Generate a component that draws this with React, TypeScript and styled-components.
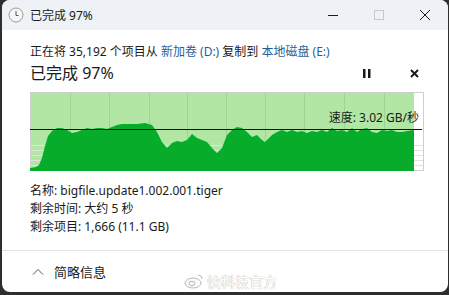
import * as React from 'react'
import styled, { createGlobalStyle } from 'styled-components'

const GlobalStyle = createGlobalStyle`
  html, body {
    margin: 0;
    padding: 0;
    background: #2e2e2e;
  }
  body {
    font-family: "Noto Sans", "Noto Sans CJK SC", sans-serif;
    color: #1a1a1a;
  }
`

const Page = styled.div`
  width: 449px;
  height: 295px;
  padding: 0 1px 3px 2px;
  box-sizing: border-box;
`

const Window = styled.div`
  height: 100%;
  background: #fff;
  border-radius: 8px;
  overflow: hidden;
  display: flex;
  flex-direction: column;
`

const TitleBar = styled.div`
  height: 30px;
  flex: none;
  background: #eef1f6;
  display: flex;
  align-items: center;
  padding-left: 6px;
`

const TitleText = styled.span`
  font-size: 12px;
  margin-left: 6px;
`

const TitleButtons = styled.div`
  margin-left: auto;
  display: flex;
  height: 100%;
`

const TitleButton = styled.div`
  width: 46px;
  height: 100%;
  display: flex;
  align-items: center;
  justify-content: center;
`

const Body = styled.div`
  padding: 13px 26px 0 28px;
  display: flex;
  flex-direction: column;
`

const Summary = styled.div`
  font-size: 12px;
  line-height: 18px;
  white-space: nowrap;
`

const Link = styled.span`
  color: #1f5f96;
`

const ProgressRow = styled.div`
  display: flex;
  align-items: center;
  height: 20px;
  margin-top: 2px;
`

const Percent = styled.span`
  font-size: 16px;
  line-height: 20px;
  white-space: nowrap;
  flex: none;
`

const IconButton = styled.div<{ $first?: boolean }>`
  margin-left: ${p => (p.$first ? 'auto' : '33px')};
  margin-right: ${p => (p.$first ? '0' : '1px')};
  width: 14px;
  height: 14px;
  display: flex;
  align-items: center;
  justify-content: center;
`

const ChartBox = styled.div`
  position: relative;
  margin-top: 9px;
  width: 394px;
  height: 79px;
`

const SpeedLabel = styled.span`
  position: absolute;
  right: 5px;
  top: 18px;
  font-size: 12px;
  line-height: 16px;
  color: #1a1a1a;
`

const Details = styled.div`
  margin-top: 11px;
  font-size: 12px;
  line-height: 18px;
`

const Separator = styled.div`
  height: 1px;
  background: #e3e3e3;
  margin-top: 14px;
`

const Footer = styled.div`
  flex: 1;
  display: flex;
  align-items: center;
  padding-left: 30px;
  font-size: 13px;
  position: relative;
`

const FooterLabel = styled.span`
  margin-left: 10px;
`

const Watermark = styled.span`
  position: absolute;
  left: 182px;
  top: 20px;
  font-size: 14px;
  color: #ffffff;
  text-shadow: 0 0 1px #b8b8b8, 0 0 1px #b8b8b8;
  display: flex;
  align-items: center;
  gap: 3px;
`

const points: [number, number][] = [
  [28, 168], [34, 167], [37, 165], [40, 158], [43, 146], [46, 136], [50, 131], [55, 128],
  [60, 128], [65, 130], [70, 133], [75, 132], [80, 130], [85, 128], [90, 129], [95, 128],
  [100, 128], [105, 129], [110, 127], [115, 125], [120, 124], [128, 124], [135, 124],
  [143, 123], [150, 125], [155, 132], [160, 142], [165, 148], [170, 143], [175, 141],
  [180, 142], [185, 140], [190, 134], [195, 138], [200, 140], [205, 142], [210, 148],
  [215, 153], [220, 148], [225, 135], [230, 130], [235, 127], [240, 128], [245, 132],
  [250, 137], [255, 135], [260, 140], [263, 142], [270, 135], [275, 132], [280, 130],
  [285, 132], [290, 130], [295, 132], [300, 131], [305, 133], [310, 131], [315, 132],
  [320, 130], [325, 132], [330, 128], [335, 131], [340, 130], [345, 132], [350, 128],
  [355, 132], [360, 129], [365, 128], [370, 132], [375, 133], [380, 130], [385, 131],
  [390, 130], [395, 132], [400, 132], [405, 131], [412, 130],
]

function SpeedChart() {
  const ox = 28
  const oy = 92
  const w = 394
  const h = 79
  const done = 384
  const area =
    `M0 ${h} ` +
    points.map(([x, y]) => `L${x - ox} ${y - oy}`).join(' ') +
    ` L${done} ${h} Z`
  const vlines = [40, 79, 119, 157, 196, 235, 274, 314, 354]
  const hlines = [53, 58, 63, 68, 73]
  return (
    <svg width={w} height={h} viewBox={`0 0 ${w} ${h}`}>
      <rect x="0.5" y="0.5" width={w - 1} height={h - 1} fill="#fff" stroke="#cfcfcf" />
      <rect x="1" y="1" width={done - 1} height={h - 2} fill="#b1e6a4" />
      {hlines.map(y => (
        <line key={y} x1="1" x2={w - 1} y1={y + 0.5} y2={y + 0.5} stroke="#e2e2e2" />
      ))}
      {vlines.map(x => (
        <line key={x} x1={x + 0.5} x2={x + 0.5} y1="1" y2={h - 1} stroke="#9fd392" />
      ))}
      <path d={area} fill="#07ad2a" />
      <line x1="0" x2={w - 2} y1="37.5" y2="37.5" stroke="#111" strokeWidth="1" />
    </svg>
  )
}

function ClockIcon() {
  return (
    <svg width="16" height="16" viewBox="0 0 16 16">
      <circle cx="8" cy="8" r="7" fill="#f7f7f7" stroke="#9a9a9a" />
      <path d="M8 4 V8.5 H10.5" stroke="#555" strokeWidth="1" fill="none" />
    </svg>
  )
}

export default function App() {
  return (
    <Page>
      <GlobalStyle />
      <Window>
        <TitleBar>
          <ClockIcon />
          <TitleText>已完成 97%</TitleText>
          <TitleButtons>
            <TitleButton>
              <svg width="10" height="10" viewBox="0 0 10 10">
                <line x1="0" x2="10" y1="5.5" y2="5.5" stroke="#1a1a1a" />
              </svg>
            </TitleButton>
            <TitleButton>
              <svg width="10" height="10" viewBox="0 0 10 10">
                <rect x="0.5" y="0.5" width="9" height="9" fill="none" stroke="#c8c8c8" />
              </svg>
            </TitleButton>
            <TitleButton>
              <svg width="10" height="10" viewBox="0 0 10 10">
                <path d="M0 0 L10 10 M10 0 L0 10" stroke="#1a1a1a" />
              </svg>
            </TitleButton>
          </TitleButtons>
        </TitleBar>
        <Body>
          <Summary>
            正在将 35,192 个项目从 <Link>新加卷 (D:)</Link> 复制到 <Link>本地磁盘 (E:)</Link>
          </Summary>
          <ProgressRow>
            <Percent>已完成 97%</Percent>
            <IconButton $first>
              <svg width="8" height="9" viewBox="0 0 8 9">
                <rect x="0" y="0" width="2.5" height="9" fill="#1a1a1a" />
                <rect x="5" y="0" width="2.5" height="9" fill="#1a1a1a" />
              </svg>
            </IconButton>
            <IconButton>
              <svg width="9" height="9" viewBox="0 0 9 9">
                <path d="M1 1 L8 8 M8 1 L1 8" stroke="#1a1a1a" strokeWidth="2" />
              </svg>
            </IconButton>
          </ProgressRow>
          <ChartBox>
            <SpeedChart />
            <SpeedLabel>速度: 3.02 GB/秒</SpeedLabel>
          </ChartBox>
          <Details>
            <div>名称: bigfile.update1.002.001.tiger</div>
            <div>剩余时间: 大约 5 秒</div>
            <div>剩余项目: 1,666 (11.1 GB)</div>
          </Details>
        </Body>
        <Separator />
        <Footer>
          <svg width="12" height="8" viewBox="0 0 12 8">
            <path d="M1 6.5 L6 1.5 L11 6.5" stroke="#555" fill="none" />
          </svg>
          <FooterLabel>简略信息</FooterLabel>
          <Watermark>
            <svg width="20" height="16" viewBox="0 0 20 16">
              <ellipse cx="9" cy="10" rx="8" ry="5" fill="#fafafa" stroke="#b8b8b8" />
              <ellipse cx="8" cy="10.5" rx="3" ry="2.2" fill="none" stroke="#b8b8b8" />
              <path d="M14 2 a4 4 0 0 1 4 4" stroke="#b8b8b8" fill="none" />
            </svg>
            快科技官方
          </Watermark>
        </Footer>
      </Window>
    </Page>
  )
}
